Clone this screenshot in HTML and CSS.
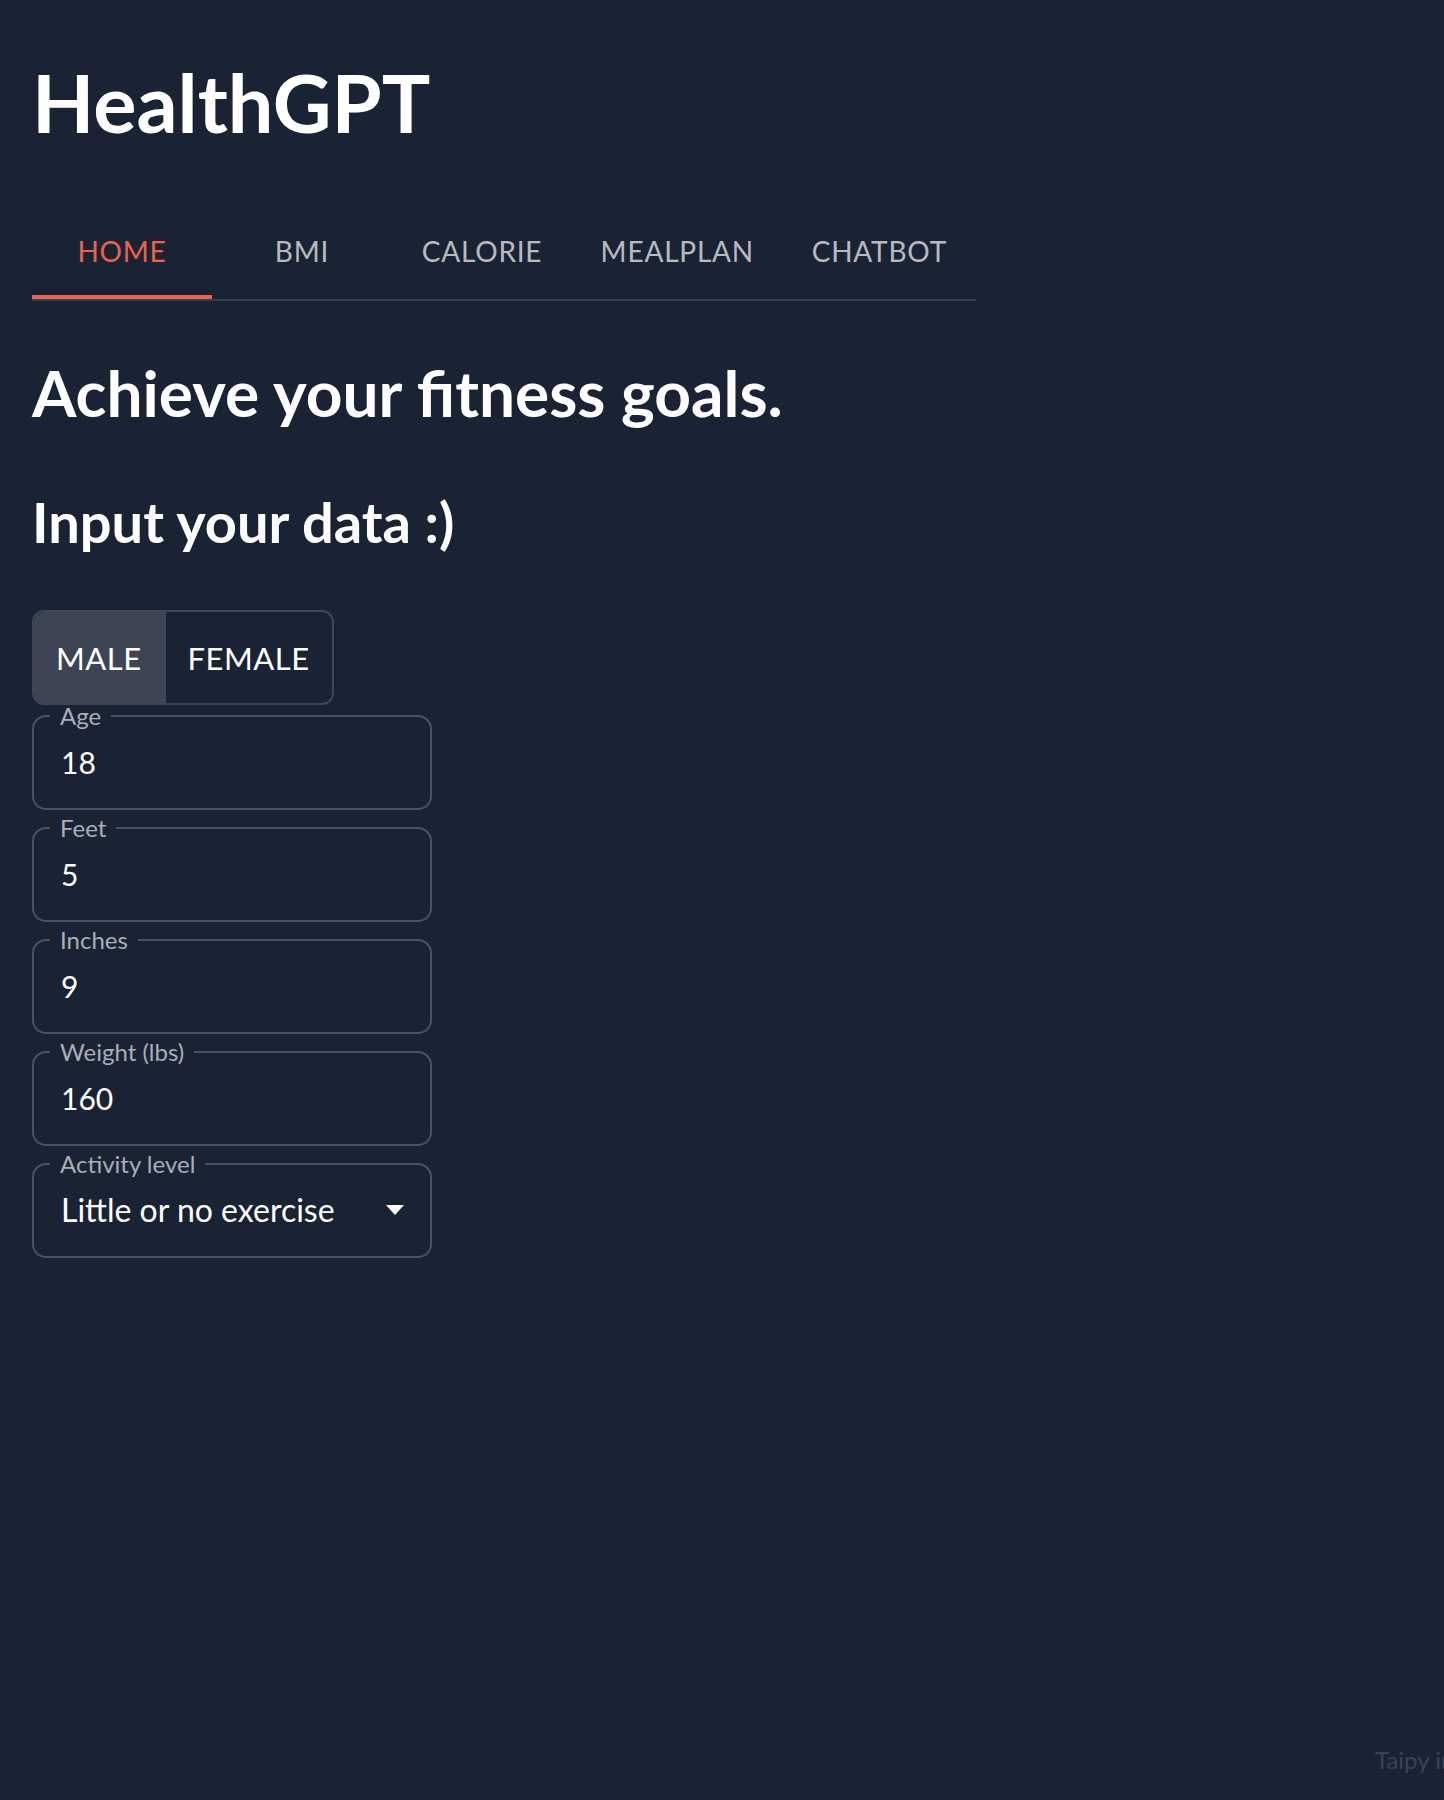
FILE: index.html
```html
<!DOCTYPE html>
<html lang="en">
<head>
<meta charset="utf-8">
<title>HealthGPT</title>
<link rel="stylesheet" href="styles.css">
</head>
<body>
<main class="page">
  <h1 class="app-title">HealthGPT</h1>
  <nav class="tabs">
    <a class="tab tab-active">HOME</a>
    <a class="tab">BMI</a>
    <a class="tab">CALORIE</a>
    <a class="tab">MEALPLAN</a>
    <a class="tab">CHATBOT</a>
  </nav>
  <h2 class="headline">Achieve your fitness goals.</h2>
  <h3 class="subhead">Input your data :)</h3>
  <div class="toggle-group">
    <button class="toggle toggle-selected">MALE</button>
    <button class="toggle">FEMALE</button>
  </div>
  <div class="fields">
    <fieldset class="field">
      <legend class="field-label">Age</legend>
      <div class="field-value">18</div>
    </fieldset>
    <fieldset class="field">
      <legend class="field-label">Feet</legend>
      <div class="field-value">5</div>
    </fieldset>
    <fieldset class="field">
      <legend class="field-label">Inches</legend>
      <div class="field-value">9</div>
    </fieldset>
    <fieldset class="field">
      <legend class="field-label">Weight (lbs)</legend>
      <div class="field-value">160</div>
    </fieldset>
    <fieldset class="field">
      <legend class="field-label">Activity level</legend>
      <div class="field-value select-value">
        <span>Little or no exercise</span>
        <svg class="select-arrow" width="18" height="10" viewBox="0 0 18 10"><path d="M0 0 L18 0 L9 10 Z" fill="#ffffff"/></svg>
      </div>
    </fieldset>
  </div>
</main>
<div class="watermark">Taipy inside</div>
</body>
</html>
```

FILE: styles.css
```css
html, body {
  margin: 0;
  padding: 0;
  background: #1a2333;
  overflow: hidden;
}
body {
  min-height: 1800px;
  font-family: Lato, "Open Sans", sans-serif;
  color: #ffffff;
  position: relative;
}
.page {
  padding: 54px 0 0 32px;
}
.app-title {
  margin: 0;
  font-size: 81px;
  line-height: 96px;
  font-weight: 700;
}
.tabs {
  margin-top: 53px;
  display: flex;
  width: 944px;
  border-bottom: 2px solid #363f50;
}
.tab {
  position: relative;
  min-width: 180px;
  box-sizing: border-box;
  padding: 0 32px;
  height: 96px;
  display: flex;
  align-items: center;
  justify-content: center;
  font-size: 28px;
  letter-spacing: 0.8px;
  color: rgba(255, 255, 255, 0.7);
}
.tab-active {
  color: #e9634d;
}
.tab-active::after {
  content: "";
  position: absolute;
  left: 0;
  right: 0;
  bottom: 0;
  height: 4px;
  background: #e9634d;
}
.headline {
  margin: 53px 0 0;
  font-size: 64px;
  line-height: 77px;
  font-weight: 700;
}
.subhead {
  margin: 57px 0 0;
  font-size: 56px;
  line-height: 67px;
  font-weight: 700;
}
.toggle-group {
  margin-top: 55px;
  display: inline-flex;
  border: 2px solid #3e4757;
  border-radius: 12px;
  overflow: hidden;
}
.toggle {
  font-family: Lato, sans-serif;
  font-size: 31px;
  color: #ffffff;
  background: transparent;
  border: none;
  height: 91px;
  padding: 0 22px;
  letter-spacing: 0.5px;
}
.toggle + .toggle {
  border-left: 2px solid #3e4757;
}
.toggle-selected {
  background: #3d4555;
}
.fields {
  display: flex;
  flex-direction: column;
  gap: 6px;
  margin-top: -1px;
}
.field {
  margin: 0;
  width: 400px;
  box-sizing: border-box;
  border: 2px solid #4a5262;
  border-radius: 14px;
  padding: 0 27px;
  min-inline-size: 0;
}
.field-label {
  padding: 0 10px;
  margin-left: -11px;
  font-size: 24px;
  line-height: 24px;
  color: #a9aeb7;
}
.field-value {
  font-size: 30px;
  line-height: 36px;
  padding: 16px 0 28px;
}
.select-value {
  display: flex;
  align-items: center;
  justify-content: space-between;
  font-size: 32px;
  padding-right: 0;
}
.select-arrow {
  margin-right: -1px;
}
.watermark {
  position: absolute;
  left: 1375px;
  top: 1748px;
  font-size: 24px;
  line-height: 24px;
  color: #3a4354;
  white-space: nowrap;
}
```
